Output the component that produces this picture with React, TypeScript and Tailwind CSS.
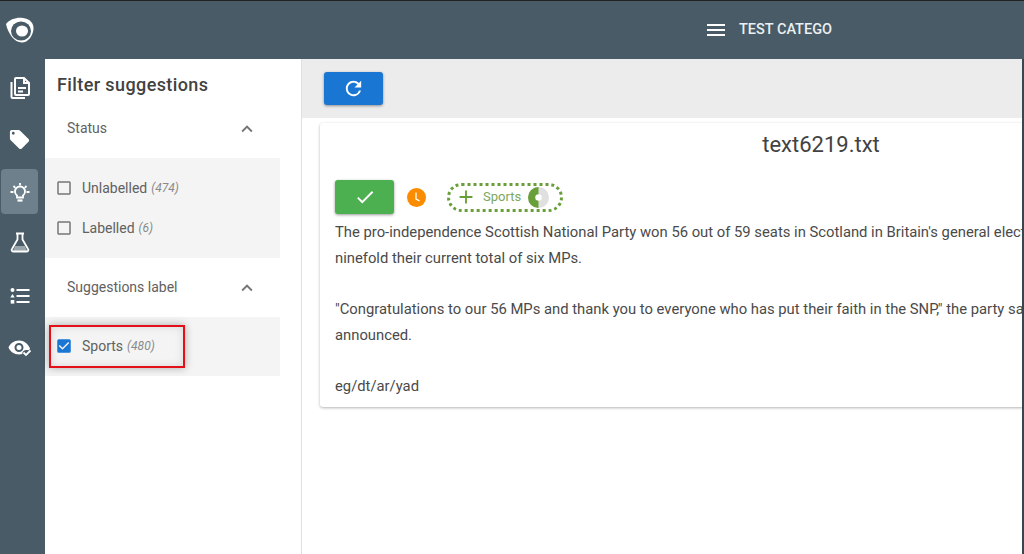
import { MdAdd, MdCheck, MdCheckBox, MdCheckBoxOutlineBlank, MdExpandLess, MdLocalOffer, MdMenu, MdRefresh } from "react-icons/md";

function DocsIcon() {
  return (
    <svg width="22" height="24" viewBox="0 0 22 24" fill="none" stroke="white" strokeWidth="2">
      <path d="M7 2h8l5 5v11a1 1 0 0 1-1 1H7a1 1 0 0 1-1-1V3a1 1 0 0 1 1-1z" />
      <path d="M15 2v5h5M9 12h8M9 15.5h5" />
      <path d="M2.5 6v15a1 1 0 0 0 1 1H16" />
    </svg>
  );
}

function BulbIcon() {
  return (
    <svg width="24" height="24" viewBox="0 0 24 24" fill="none" stroke="white" strokeWidth="1.800">
      <path d="M9 17.500v-2a5 5 0 1 1 6 0v2z" />
      <path d="M9.500 20.500h5" strokeWidth="2.200" />
      <path d="M12 3v2.500M5.500 6l1.800 1.800M18.500 6l-1.800 1.800M2.500 12h3M18.500 12h3" />
    </svg>
  );
}

function FlaskIcon() {
  return (
    <svg width="20" height="21" viewBox="0 0 20 21" fill="none" stroke="white" strokeWidth="1.800">
      <path d="M6 1.500h8M7.500 1.500v6L2 17a1.500 1.500 0 0 0 1.300 2.500h13.400A1.500 1.500 0 0 0 18 17l-5.500-9.500v-6" />
      <path d="M5 14h10l2 5H3z" fill="white" stroke="none" opacity="0.45" />
    </svg>
  );
}

function ListIcon() {
  return (
    <svg width="20" height="18" viewBox="0 0 20 18" fill="white">
      <circle cx="2.500" cy="3" r="2" />
      <path d="M2.500 7l2.200 3.600H.3z" />
      <rect x=".7" y="13" width="3.600" height="3.600" />
      <rect x="6.500" y="2" width="13" height="2" />
      <rect x="6.500" y="8" width="13" height="2" />
      <rect x="6.500" y="14" width="13" height="2" />
    </svg>
  );
}

function EyeCheckIcon() {
  return (
    <svg width="24" height="18" viewBox="0 0 24 18" fill="white">
      <path fillRule="evenodd" d="M11 1.500C6 1.500 2.200 4.500.5 8.500c1.700 4 5.500 7 10.500 7 1.200 0 2.300-.2 3.300-.5l.2-1.500c.5-1.800 2.600-3 4.500-2.500l2.200.2.8-1.700C20 4.500 16 1.500 11 1.500zM11 4a4.500 4.500 0 1 1 0 9 4.500 4.500 0 0 1 0-9zm0 2a2.500 2.500 0 1 0 0 5 2.500 2.500 0 0 0 0-5z" />
      <path d="M15.500 13.500l2.500 2.500 4.500-4.500" fill="none" stroke="white" strokeWidth="1.800" />
    </svg>
  );
}

function LogoIcon() {
  return (
    <svg width="30" height="28" viewBox="0 0 30 28">
      <path fill="white" d="M2 8C6 3 13 1 19 2c7 1 11 5 10.500 11C29 20 24 26.500 18 26.500 10 26.500 4 17 2 8z" />
      <ellipse cx="17" cy="15" rx="10" ry="9.500" fill="#485b66" />
      <ellipse cx="18" cy="15" rx="6" ry="5.500" fill="white" />
    </svg>
  );
}

function ClockBadge() {
  return (
    <svg width="19" height="19" viewBox="0 0 19 19" fill="none">
      <circle cx="9.500" cy="9.500" r="9.500" fill="#fb8c00" />
      <path d="M9 4.500v6.500l3.500 1.800" stroke="white" strokeWidth="1.300" />
    </svg>
  );
}

function Donut() {
  return (
    <svg width="21" height="21" viewBox="0 0 21 21">
      <circle cx="10.500" cy="10.500" r="6.900" fill="none" stroke="#e0e0e0" strokeWidth="7.200" />
      <path d="M10.500 3.600a6.900 6.900 0 0 0 0 13.800" fill="none" stroke="#689f38" strokeWidth="7.200" />
    </svg>
  );
}

function NavItem({ active, children }: { active?: boolean; children: React.ReactNode }) {
  return (
    <div className={active ? "ml-px flex h-[45px] w-[37px] items-center justify-center rounded bg-[#6d808b]" : "ml-px flex h-[45px] w-[37px] items-center justify-center"}>
      {children}
    </div>
  );
}

function Check({ label, count, on }: { label: string; count: number; on?: boolean }) {
  return (
    <div className="flex h-[40px] items-center pl-[10px]">
      {on ? <MdCheckBox className="text-[#1976d2]" size={18} /> : <MdCheckBoxOutlineBlank className="text-[#757575]" size={18} />}
      <span className="ml-[9px] text-[14px] text-[#616161]">{label}</span>
      <em className="ml-1 text-[12px] text-[#8a8a8a]">({count})</em>
    </div>
  );
}

function SectionHead({ title }: { title: string }) {
  return (
    <div className="flex h-[59px] w-[235px] items-center justify-between pr-[22px] pl-[22px] text-[14px] text-[#616161]">
      <span>{title}</span>
      <MdExpandLess size={22} className="text-[#757575]" />
    </div>
  );
}

export default function App() {
  return (
    <div className="h-[554px] w-[1024px] overflow-hidden border-t border-[#222] bg-white font-['Roboto',sans-serif]">
      <header className="flex h-[58px] items-center bg-[#485b66] pb-[1px] text-white">
        <div className="ml-[4px] flex w-[700px]"><LogoIcon /></div>
        <MdMenu size={24} />
        <span className="ml-[11px] text-[14.500px] font-medium text-[#eceff1]">TEST CATEGO</span>
      </header>
      <div className="flex h-[495px]">
        <nav className="flex w-[45px] flex-col bg-[#485b66] pt-[6px] text-white">
          <NavItem><DocsIcon /></NavItem>
          <div className="h-[7px]" />
          <NavItem><MdLocalOffer size={23} /></NavItem>
          <div className="h-[7px]" />
          <NavItem active><BulbIcon /></NavItem>
          <div className="h-[6px]" />
          <NavItem><FlaskIcon /></NavItem>
          <div className="h-[8px]" />
          <NavItem><ListIcon /></NavItem>
          <div className="h-[7px]" />
          <NavItem><EyeCheckIcon /></NavItem>
        </nav>
        <aside className="relative w-[257px] border-r border-[#e0e0e0]">
          <h2 className="ml-[12px] mt-[14px] text-[18px] leading-[24px] font-medium tracking-[0.4px] text-[#424242]">Filter suggestions</h2>
          <div className="mt-[2px]"><SectionHead title="Status" /></div>
          <div className="w-[235px] bg-[#f4f4f4] py-[10px]">
            <Check label="Unlabelled" count={474} />
            <Check label="Labelled" count={6} />
          </div>
          <SectionHead title="Suggestions label" />
          <div className="w-[235px] bg-[#f4f4f4] pt-[9px] pb-[10px]">
            <Check label="Sports" count={480} on />
          </div>
          <div className="absolute top-[266px] left-[4px] h-[43px] w-[136px] border-2 border-[#e3101a] shadow-[0_0_8px_rgba(0,0,0,0.3),inset_0_0_8px_rgba(0,0,0,0.12)]" />
        </aside>
        <main className="w-[720px] overflow-hidden">
          <div className="flex h-[59px] items-center bg-[#ececec] pl-[22px]">
            <button className="flex h-[33px] w-[59px] items-center justify-center rounded-[3px] bg-[#1976d2] text-white shadow-[0_1px_3px_rgba(0,0,0,0.4)]">
              <MdRefresh size={23} />
            </button>
          </div>
          <article className="mt-[5px] ml-[18px] h-[284px] w-[900px] rounded-[3px] bg-white shadow-[0_1px_3px_rgba(0,0,0,0.3)]">
            <h1 className="w-[1002px] pt-[8px] text-center text-[22px] leading-[28px] text-[#424242]">text6219.txt</h1>
            <div className="mt-[21px] flex items-center pl-[15px]">
              <button className="flex h-[34px] w-[59px] items-center justify-center rounded-[3px] bg-[#4caf50] text-white shadow-[0_1px_3px_rgba(0,0,0,0.4)]">
                <MdCheck size={22} />
              </button>
              <span className="ml-[13px]"><ClockBadge /></span>
              <div className="ml-[21px] flex h-[29px] w-[116px] items-center rounded-full border-[3px] border-dotted border-[#689f38] pl-[5px] text-[#689f38]">
                <MdAdd size={22} />
                <span className="ml-[6px] text-[13px] text-[#7ca75c]">Sports</span>
                <span className="ml-[7px]"><Donut /></span>
              </div>
            </div>
            <div className="mt-[6px] w-[900px] pl-[15px] text-[14.800px] leading-[25.700px] text-[#4a4a4a]">
              <p className="whitespace-nowrap">The pro-independence Scottish National Party won 56 out of 59 seats in Scotland in Britain's general election, up</p>
              <p>ninefold their current total of six MPs.</p>
              <p className="h-[25.700px]" />
              <p className="whitespace-nowrap">"Congratulations to our 56 MPs and thank you to everyone who has put their faith in the SNP," the party said as results were</p>
              <p>announced.</p>
              <p className="h-[25.700px]" />
              <p>eg/dt/ar/yad</p>
            </div>
          </article>
        </main>
        <div className="w-[2px] bg-[#37474f]" />
      </div>
    </div>
  );
}
